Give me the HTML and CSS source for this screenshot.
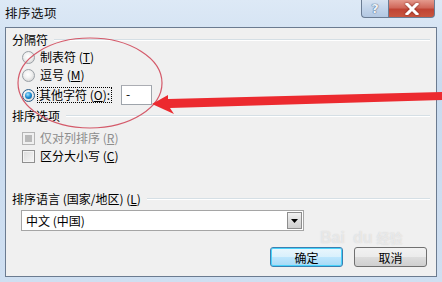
FILE: index.html
```html
<!DOCTYPE html>
<html>
<head>
<meta charset="utf-8">
<link rel="stylesheet" href="styles.css">
</head>
<body>
<div class="window">
  <div class="titlebar">
    <span class="title">排序选项</span>
    <div class="caption-buttons">
      <div class="cap-btn help">?</div>
      <div class="cap-btn close">
        <svg width="16" height="12" viewBox="0 0 16 12"><path d="M3 1 L13 11 M13 1 L3 11" stroke="#fff" stroke-width="3" stroke-linecap="square"/></svg>
      </div>
    </div>
  </div>
  <div class="client">
    <div class="group-head"><span>分隔符</span><i class="rule"></i></div>
    <div class="row">
      <span class="radio"></span><span class="label">制表符 (<u>T</u>)</span>
    </div>
    <div class="row">
      <span class="radio"></span><span class="label">逗号 (<u>M</u>)</span>
    </div>
    <div class="row row-other">
      <span class="radio checked"></span><span class="label focus">其他字符 (<u>O</u>):</span>
      <span class="textbox">-</span>
    </div>
    <div class="group-head"><span>排序选项</span><i class="rule"></i></div>
    <div class="row first-check">
      <span class="check disabled"></span><span class="label dim">仅对列排序 (<u>R</u>)</span>
    </div>
    <div class="row">
      <span class="check"></span><span class="label">区分大小写 (<u>C</u>)</span>
    </div>
    <div class="group-head lang-head"><span>排序语言 (国家/地区) (<u>L</u>)</span><i class="rule"></i></div>
    <div class="select">
      <span class="select-text">中文 (中国)</span>
      <span class="select-btn"><svg width="7" height="4" viewBox="0 0 7 4"><path d="M0 0 H7 L3.5 4 Z" fill="#000"/></svg></span>
    </div>
    <div class="buttons">
      <div class="btn default">确定</div>
      <div class="btn">取消</div>
    </div>
  </div>
  <div class="watermark"><span class="wm-bai">Bai</span><span class="wm-du">du</span><span class="wm-jy">经验</span></div>
  <svg class="annot" width="442" height="282" viewBox="0 0 442 282">
    <ellipse cx="90" cy="83" rx="72" ry="45" fill="none" stroke="#d45a6a" stroke-width="1.2"/>
    <polygon points="152,104 168,95 168,99 442,92 442,100 170,108 174,114" fill="#ec2a2f"/>
  </svg>
</div>
</body>
</html>
```
FILE: styles.css
```css
* { box-sizing: border-box; }
html, body { margin: 0; padding: 0; }
body {
  width: 442px;
  height: 282px;
  overflow: hidden;
  font-family: "Noto Sans CJK SC", "Liberation Sans", sans-serif;
  font-size: 12px;
  color: #000;
}
.window {
  position: relative;
  width: 442px;
  height: 282px;
  background: linear-gradient(180deg, #dde9f6 0%, #c9dbef 30%, #cfdff1 100%);
  display: flex;
  flex-direction: column;
  padding: 0 5px 5px 5px;
}
.titlebar {
  height: 27px;
  display: flex;
  align-items: flex-start;
  justify-content: space-between;
  flex: none;
}
.title {
  margin-top: 5px;
  font-size: 12.5px;
  letter-spacing: 0.5px;
  line-height: 16px;
  color: #111;
}
.caption-buttons {
  display: flex;
  margin-right: 2px;
}
.cap-btn {
  height: 18px;
  border: 1px solid #6a7c93;
  border-top: none;
  display: flex;
  align-items: center;
  justify-content: center;
}
.help {
  width: 27px;
  border-radius: 0 0 0 4px;
  border-right: none;
  background: linear-gradient(180deg, #d7e3f1 0%, #c2d4ea 50%, #b3c8e2 100%);
  color: #eef3fa;
  font-family: "DejaVu Sans", sans-serif;
  font-weight: bold;
  font-size: 13px;
  text-shadow: 0 0 1px #3d5574, 0 0 1px #3d5574;
}
.close {
  width: 47px;
  border-radius: 0 0 4px 0;
  background: linear-gradient(180deg, #e49a8d 0%, #d0685a 45%, #c04434 55%, #c9573f 100%);
}
.close svg { filter: drop-shadow(0 0 1px #7a2217); }
.client {
  flex: 1;
  background: #f0f0f0;
  border: 1px solid #6b7b90;
  padding: 2px 6px 0 6px;
  display: flex;
  flex-direction: column;
}
.group-head {
  height: 18px;
  display: flex;
  align-items: center;
  gap: 6px;
}
.group-head .rule {
  flex: 1;
  height: 2px;
  border-top: 1px solid #d5dfe5;
  border-bottom: 1px solid #ffffff;
  margin-top: 2px;
}
.row {
  height: 18px;
  display: flex;
  align-items: center;
  margin-left: 10px;
}
.row-other { height: 22px; }
.first-check { margin-top: 5px; }
.label { margin-left: 5px; line-height: 14px; }
.label.dim { color: #8d8d8d; }
.label.focus {
  outline: 1px dotted #000;
  padding: 0 1px;
  margin-left: 3px;
}
.radio {
  width: 13px;
  height: 13px;
  border-radius: 50%;
  border: 1px solid #9aa0a6;
  background: radial-gradient(circle at 45% 40%, #ffffff 0%, #f2f2f2 40%, #c9c9c9 100%);
  display: flex;
  align-items: center;
  justify-content: center;
}
.radio.checked { border-color: #2e5f8a; }
.radio.checked::after {
  content: "";
  width: 7px;
  height: 7px;
  border-radius: 50%;
  background: radial-gradient(circle at 40% 35%, #a6e3ff 0%, #1b8bd1 50%, #0a4f86 100%);
}
.textbox {
  margin-left: 10px;
  width: 31px;
  height: 20px;
  background: #fff;
  border: 1px solid #9ea4ab;
  border-top-color: #abadb3;
  padding-left: 4px;
  line-height: 16px;
}
.check {
  width: 13px;
  height: 13px;
  border: 1px solid #8f8f8f;
  background: linear-gradient(135deg, #dcdcdc 0%, #f6f6f6 100%);
  box-shadow: inset 0 0 0 1px #f4f4f4;
}
.check.disabled {
  border-color: #b5b5b5;
  background: #e6e6e6;
  box-shadow: inset 0 0 0 2px #f0f0f0;
  position: relative;
}
.check.disabled::after {
  content: "";
  position: absolute;
  left: 2px; top: 2px; width: 7px; height: 7px;
  background: #b9b9b9;
}
.lang-head { margin-top: 24px; }
.select {
  margin-top: 3px;
  margin-left: 9px;
  width: 283px;
  height: 21px;
  background: #fff;
  border: 1px solid #a5a5a5;
  display: flex;
  align-items: center;
  justify-content: space-between;
  padding: 1px;
}
.select-text { padding-left: 3px; }
.select-btn {
  width: 15px;
  height: 17px;
  border: 1px solid #8d8d8d;
  background: linear-gradient(180deg, #f2f2f2 0%, #dedede 50%, #cfcfcf 100%);
  display: flex;
  align-items: center;
  justify-content: center;
}
.buttons {
  margin-top: 16px;
  display: flex;
  justify-content: flex-end;
  gap: 11px;
  padding-right: 3px;
}
.btn {
  width: 73px;
  height: 20px;
  border: 1px solid #707070;
  border-radius: 3px;
  background: linear-gradient(180deg, #f2f2f2 0%, #ebebeb 50%, #dddddd 51%, #cfcfcf 100%);
  display: flex;
  align-items: center;
  justify-content: center;
}
.btn.default {
  border-color: #3c7fb1;
  box-shadow: inset 0 0 0 1px #48d3fb;
  background: linear-gradient(180deg, #eaf6fd 0%, #d9f0fc 50%, #bee6fd 51%, #a7d9f5 100%);
}
.watermark {
  position: absolute;
  left: 320px;
  top: 229px;
  height: 18px;
  display: flex;
  align-items: baseline;
  line-height: 18px;
  color: rgba(255,255,255,0.5);
  text-shadow: 0 0 1px rgba(140,140,140,0.35);
  font-family: "Liberation Sans", sans-serif;
  font-weight: bold;
  font-size: 16px;
  pointer-events: none;
}
.wm-du { margin-left: 8px; }
.wm-jy { margin-left: 4px; font-size: 13px; font-family: "Noto Sans CJK SC", sans-serif; }
.annot {
  position: absolute;
  left: 0;
  top: 0;
  pointer-events: none;
}
```
